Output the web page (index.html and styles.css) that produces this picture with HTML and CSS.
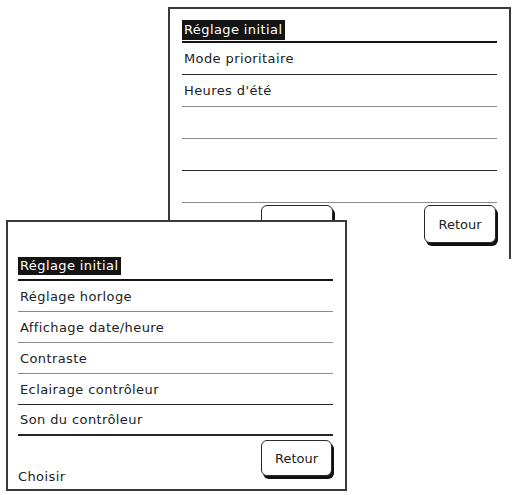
FILE: index.html
```html
<!DOCTYPE html>
<html lang="fr">
<head>
    <meta charset="UTF-8">
    <meta name="viewport" content="width=device-width, initial-scale=1.0">
    <title>Réglage initial</title>
    <link rel="stylesheet" href="styles.css">
</head>
<body>

    <div class="desk">

        <!-- Back screen -->
        <div class="screen screen-back">
            <ul class="menu">
                <li class="menu-row menu-head"><span class="selected">Réglage initial</span></li>
                <li class="menu-row dark">Mode prioritaire</li>
                <li class="menu-row">Heures d'été</li>
                <li class="menu-row"></li>
                <li class="menu-row dark"></li>
                <li class="menu-row"></li>
            </ul>
            <div class="screen-foot">
                <button class="btn btn-hidden">Choisir</button>
                <button class="btn">Retour</button>
            </div>
        </div>

        <!-- Front screen -->
        <div class="screen screen-front">
            <ul class="menu">
                <li class="menu-row menu-head"><span class="selected">Réglage initial</span></li>
                <li class="menu-row">Réglage horloge</li>
                <li class="menu-row">Affichage date/heure</li>
                <li class="menu-row">Contraste</li>
                <li class="menu-row dark">Eclairage contrôleur</li>
                <li class="menu-row dark thick">Son du contrôleur</li>
            </ul>
            <div class="screen-foot">
                <span class="hint">Choisir</span>
                <button class="btn">Retour</button>
            </div>
        </div>

    </div>

</body>
</html>
```

FILE: styles.css
```css
/* Basic reset */
* {
    margin: 0;
    padding: 0;
    box-sizing: border-box;
}

body {
    background-color: #ffffff;
    font-family: 'DejaVu Sans', sans-serif;
    font-size: 13px;
    letter-spacing: 0.4px;
    color: #222222;
}

/* The sheet both screens sit on */
.desk {
    position: relative;
    width: 514px;
    height: 495px;
    overflow: hidden;
}

/* Screen frames */
.screen {
    position: absolute;
    background-color: #ffffff;
    border: 2px solid #3a3a3a;
    display: flex;
    flex-direction: column;
}

.screen-back {
    left: 168px;
    top: 7px;
    width: 343px;
    height: 252px;
    border-bottom: none;
    padding: 11px 12px 0 12px;
}

.screen-front {
    left: 6px;
    top: 220px;
    width: 341px;
    height: 271px;
    padding: 35px 12px 0 10px;
}

/* Menu list */
.menu {
    list-style-type: none;
}

.menu-row {
    height: 32px;
    display: flex;
    align-items: center;
    padding-left: 2px;
    border-bottom: 1px solid #8a8a8a;
}

.screen-front .menu-row {
    height: 31px;
}

.menu-row.dark {
    border-bottom-color: #262626;
}

.menu-row.thick {
    border-bottom-width: 2px;
}

.menu-head {
    height: 23px;
    align-items: flex-start;
    padding-left: 0;
    border-bottom: 2px solid #141414;
}

.screen-front .menu-head {
    height: 24px;
}

.selected {
    background-color: #141414;
    color: #ffffff;
    padding: 1px 3px 2px 2px;
    line-height: 17px;
}

.screen-front .selected {
    line-height: 15px;
}

/* Bottom bar with buttons */
.screen-foot {
    display: flex;
    align-items: flex-end;
    justify-content: space-between;
    margin-top: 2px;
}

.screen-back .screen-foot {
    justify-content: flex-end;
    gap: 90px;
}

.screen-front .screen-foot {
    margin-top: 4px;
}

.btn {
    width: 72px;
    height: 38px;
    background-color: #ffffff;
    border: 1.5px solid #2a2a2a;
    border-radius: 6px;
    box-shadow: 2px 3px 0 #111111;
    font-family: 'DejaVu Sans', sans-serif;
    font-size: 13px;
    color: #222222;
    margin-right: 1px;
}

/* Button that sits under the front screen */
.btn-hidden {
    padding-top: 10px;
}

.screen-front .btn {
    height: 36px;
    width: 71px;
}

.hint {
    margin-bottom: -8px;
}
```
